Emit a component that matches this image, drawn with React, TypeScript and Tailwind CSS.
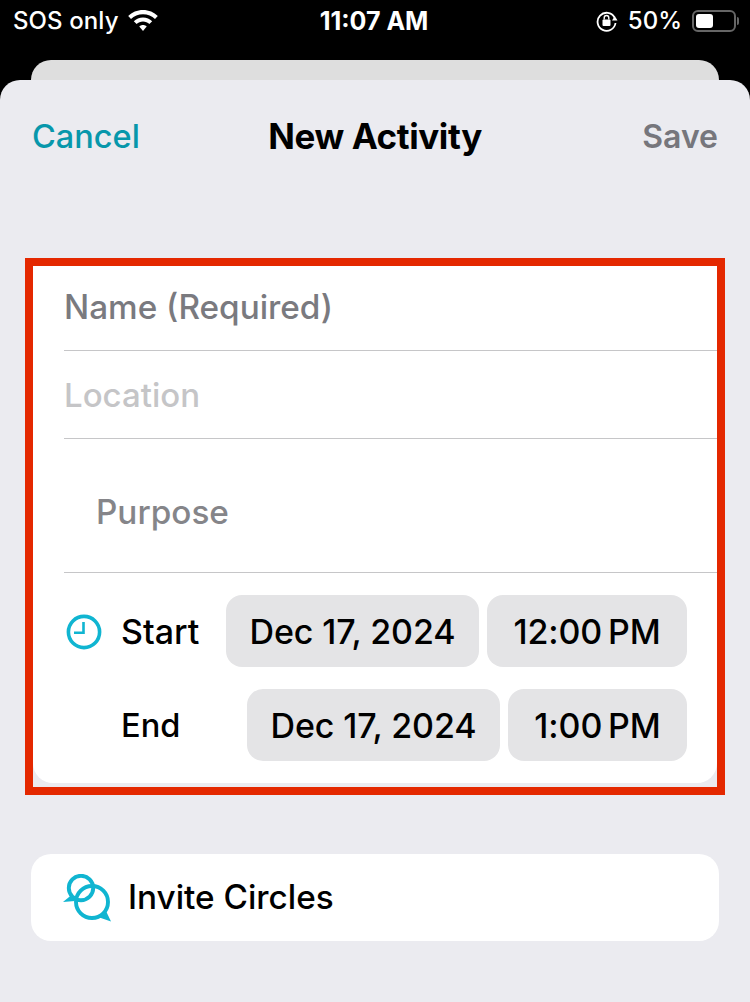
import React from "react";

const font = { fontFamily: "Inter, 'Liberation Sans', sans-serif" };

function Clock() {
  return (
    <svg width="36" height="36" viewBox="0 0 36 36" fill="none" stroke="#10b5d1" className="ml-[2px] mt-[2px]">
      <circle cx="18" cy="18" r="15.6" strokeWidth="3.6" />
      <path d="M17.5 8V18.8H8" strokeWidth="2.6" />
    </svg>
  );
}

function Chats() {
  return (
    <svg width="48" height="48" viewBox="0 0 48 48" fill="none">
      <circle cx="18" cy="14" r="12.2" stroke="#10b5d1" strokeWidth="3.9" />
      <circle cx="29" cy="28" r="16" stroke="#10b5d1" strokeWidth="3.9" />
      <path d="M0 28L8.5 21L12 27Z" fill="#10b5d1" />
      <path d="M48 47.5L35 43L42.5 36Z" fill="#10b5d1" />
    </svg>
  );
}

function Wifi() {
  return (
    <svg width="30" height="22" viewBox="0 0 30 22" fill="white">
      <path d="M15 0C9.2 0 4 2.3 0.2 6L3 9C6 6 10.3 4.2 15 4.2S24 6 27 9L29.8 6C26 2.3 20.8 0 15 0Z" />
      <path d="M15 7.5C11.4 7.5 8.2 8.9 5.8 11.2L8.6 14.1C10.3 12.5 12.5 11.6 15 11.6S19.7 12.5 21.4 14.1L24.2 11.2C21.8 8.9 18.6 7.5 15 7.5Z" />
      <path d="M15 15C13.6 15 12.3 15.5 11.3 16.5L15 21L18.7 16.5C17.7 15.5 16.4 15 15 15Z" />
    </svg>
  );
}

function RotationLock() {
  return (
    <svg width="22" height="22" viewBox="0 0 22 22" fill="none">
      <path d="M18.5 7.5A9 9 0 1 0 19.5 13" stroke="white" strokeWidth="1.8" />
      <path d="M21.5 10.5L16 10.5L18.8 6Z" fill="white" />
      <rect x="6.5" y="9.5" width="8" height="6.5" rx="1" fill="white" />
      <path d="M8.2 9.5V7.8A2.3 2.3 0 0 1 12.8 7.8V9.5" stroke="white" strokeWidth="1.4" />
    </svg>
  );
}

function Pill({ children, className }: { children: React.ReactNode; className: string }) {
  return (
    <div className={`h-[72px] rounded-2xl bg-[#e4e4e6] flex items-center justify-center text-[34px] font-medium text-black tracking-[-0.1px] whitespace-nowrap ${className}`}>
      {children}
    </div>
  );
}

export default function App() {
  return (
    <div style={font} className="w-[750px] h-[1002px] bg-black overflow-hidden flex flex-col">
      <div className="h-[60px] shrink-0 text-white text-[24px] font-medium">
        <div className="h-[42px] pl-[13px] pr-[11px] grid grid-cols-3 items-center">
          <div className="flex items-center gap-[9px] tracking-[0.1px] whitespace-nowrap">
            <span>SOS only</span>
            <Wifi />
          </div>
          <div className="text-center font-bold text-[25px] whitespace-nowrap pr-[4px] pt-[1px]">11:07 AM</div>
          <div className="flex items-center justify-end gap-[10px]">
            <RotationLock />
            <span>50%</span>
            <div className="flex items-center gap-[1px]">
              <div className="w-[44px] h-[22px] rounded-[6px] border-2 border-[#666666] p-[2px]">
                <div className="w-[17px] h-full rounded-[3px] bg-white" />
              </div>
              <div className="w-[2px] h-[8px] rounded-r bg-[#666666]" />
            </div>
          </div>
        </div>
      </div>

      <div className="mx-[31px] h-[20px] shrink-0 rounded-t-[20px] bg-[#dedede]" />

      <div className="flex-1 rounded-t-[20px] bg-[#ebebf0] flex flex-col">
        <div className="h-[112px] shrink-0 px-[32px] pt-[35px] flex items-start justify-between text-[32px] font-semibold leading-[44px]">
          <span className="text-[#0797ab] font-medium w-[120px] text-[32.5px]">Cancel</span>
          <span className="text-black font-bold text-[35px] tracking-[-0.4px] whitespace-nowrap -mt-[1px]">New Activity</span>
          <span className="text-[#76767c] w-[120px] text-right">Save</span>
        </div>

        <div className="mt-[66px] mx-[25px] w-[700px] h-[537px] shrink-0 border-[8px] border-[#e42800] bg-[#ebebf0]">
          <div className="h-[517px] bg-white rounded-b-[20px] pl-[31px] text-[33.3px] font-medium">
            <div className="h-[85px] border-b border-[#c6c6c8] flex items-center text-[#7a7a7f]">Name (Required)</div>
            <div className="h-[88px] border-b border-[#c6c6c8] flex items-center pt-[2px] text-[#c5c5c7] text-[33px]">Location</div>
            <div className="h-[134px] border-b border-[#c6c6c8] flex items-center pl-[32px] pt-[14px] text-[#858589]">Purpose</div>
            <div className="pr-[30px] text-black">
              <div className="pt-[22px] flex items-center">
                <Clock />
                <span className="ml-[19px] text-[34px]">Start</span>
                <div className="ml-auto flex gap-[8px]">
                  <Pill className="w-[253px]">Dec 17, 2024</Pill>
                  <Pill className="w-[200px]">12:00{"\u2009"}PM</Pill>
                </div>
              </div>
              <div className="pt-[22px] flex items-center">
                <span className="ml-[57px] text-[32.6px]">End</span>
                <div className="ml-auto flex gap-[8px]">
                  <Pill className="w-[253px]">Dec 17, 2024</Pill>
                  <Pill className="w-[179px]">1:00{"\u2009"}PM</Pill>
                </div>
              </div>
            </div>
          </div>
        </div>

        <div className="mt-[59px] mx-[31px] h-[87px] rounded-[20px] bg-white flex items-center pl-[32px] gap-[17px] text-[33.3px] font-medium text-black">
          <Chats />
          <span className="pt-[1px]">Invite Circles</span>
        </div>
      </div>
    </div>
  );
}
